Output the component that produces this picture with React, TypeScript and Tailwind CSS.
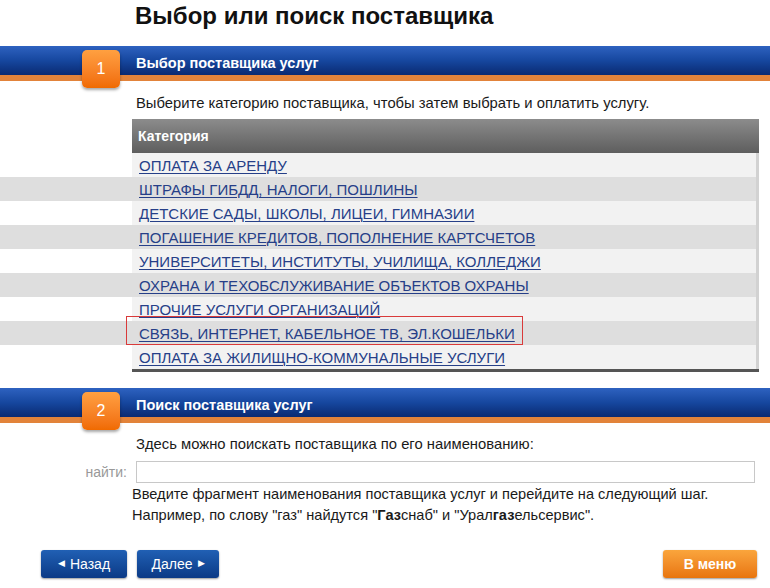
const categorias = [
  'ОПЛАТА ЗА АРЕНДУ',
  'ШТРАФЫ ГИБДД, НАЛОГИ, ПОШЛИНЫ',
  'ДЕТСКИЕ САДЫ, ШКОЛЫ, ЛИЦЕИ, ГИМНАЗИИ',
  'ПОГАШЕНИЕ КРЕДИТОВ, ПОПОЛНЕНИЕ КАРТСЧЕТОВ',
  'УНИВЕРСИТЕТЫ, ИНСТИТУТЫ, УЧИЛИЩА, КОЛЛЕДЖИ',
  'ОХРАНА И ТЕХОБСЛУЖИВАНИЕ ОБЪЕКТОВ ОХРАНЫ',
  'ПРОЧИЕ УСЛУГИ ОРГАНИЗАЦИЙ',
  'СВЯЗЬ, ИНТЕРНЕТ, КАБЕЛЬНОЕ ТВ, ЭЛ.КОШЕЛЬКИ',
  'ОПЛАТА ЗА ЖИЛИЩНО-КОММУНАЛЬНЫЕ УСЛУГИ',
];

function Paso({ n, titulo }: { n: number; titulo: string }) {
  return (
    <div className="relative h-[36px]">
      <div className="h-[29px] bg-gradient-to-b from-[#2e62c0] via-[#16479f] to-[#0a2a72]" />
      <div className="h-[6px] bg-[#e2833a]" />
      <div className="absolute left-[82px] top-[4px] w-[38px] h-[38px] rounded-[5px] bg-gradient-to-b from-[#ffa040] to-[#f06a00] shadow-[0_2px_3px_rgba(0,0,0,0.35)] flex items-center justify-center text-white text-[16px]">
        {n}
      </div>
      <div className="absolute left-[136px] top-[7px] text-white font-bold text-[14.5px]">{titulo}</div>
    </div>
  );
}

export default function App() {
  return (
    <div className="w-[770px] h-[588px] bg-white overflow-hidden font-['Liberation_Sans',Arial,sans-serif] text-[#1a1a1a]">
      <h1 className="pl-[135px] pt-[1px] h-[46px] text-[24px] leading-[30px] font-bold text-[#111]">Выбор или поиск поставщика</h1>

      <Paso n={1} titulo="Выбор поставщика услуг" />

      <p className="pl-[136px] mt-[12px] text-[14.8px] leading-[18px]">
        Выберите категорию поставщика, чтобы затем выбрать и оплатить услугу.
      </p>

      <div className="mt-[7px]">
        <div className="ml-[132px] w-[627px] h-[34px] bg-gradient-to-b from-[#8c8c8c] to-[#5e5e5e] flex items-center pl-[6px] text-white font-bold text-[14px]">
          Категория
        </div>
        {categorias.map((c, i) => (
          <div key={c} className={`flex h-[24px] ${i % 2 === 1 ? 'bg-[#dedede]' : 'bg-white'} w-[759px]`}>
            <div className="w-[132px]" />
            <div
              className={`relative flex-1 flex items-center pl-[7px] pt-[2px] border-r-[3px] border-[#d2d2d2] ${
                i % 2 === 1 ? 'bg-[#dedede]' : 'bg-[#f2f2f2]'
              }`}
            >
              <a href="#" className="text-[15px] text-[#263f88] underline underline-offset-2 decoration-1">
                {c}
              </a>
              {i === 7 && (
                <div className="absolute left-[-6px] top-[-5px] w-[397px] h-[29px] border border-[#d93a3a]" />
              )}
            </div>
          </div>
        ))}
        <div className="ml-[132px] w-[627px] h-[3px] bg-[#555]" />
      </div>

      <div className="mt-[16px]">
        <Paso n={2} titulo="Поиск поставщика услуг" />
      </div>

      <p className="pl-[136px] mt-[11px] text-[14.8px] leading-[18px]">
        Здесь можно поискать поставщика по его наименованию:
      </p>

      <div className="flex items-center mt-[8px]">
        <span className="w-[127px] text-right text-[14px] text-[#999]">найти:</span>
        <input className="ml-[9px] w-[619px] h-[22px] border border-[#c8c8c8] outline-none" />
      </div>

      <div className="pl-[132px] mt-[1px] text-[14.6px] leading-[21px]">
        <p>Введите фрагмент наименования поставщика услуг и перейдите на следующий шаг.</p>
        <p>
          Например, по слову "газ" найдутся "<b>Газ</b>снаб" и "Урал<b>газ</b>ельсервис".
        </p>
      </div>

      <div className="flex items-center mt-[24px] px-[41px] pr-[13px]">
        <button className="w-[86px] h-[28px] rounded-[3px] bg-gradient-to-b from-[#2160b4] to-[#0b3a86] text-white text-[14px] shadow-[0_1px_2px_rgba(0,0,0,0.4)] flex items-center justify-center gap-[5px]">
          <span className="text-[9px]">◀</span>Назад
        </button>
        <button className="ml-[10px] w-[82px] h-[28px] rounded-[3px] bg-gradient-to-b from-[#2160b4] to-[#0b3a86] text-white text-[14px] shadow-[0_1px_2px_rgba(0,0,0,0.4)] flex items-center justify-center gap-[5px]">
          Далее<span className="text-[9px]">▶</span>
        </button>
        <button className="ml-auto w-[94px] h-[28px] rounded-[3px] bg-gradient-to-b from-[#faa53c] to-[#e8750c] text-white font-bold text-[14px] shadow-[0_1px_2px_rgba(0,0,0,0.4)]">
          В меню
        </button>
      </div>
    </div>
  );
}
